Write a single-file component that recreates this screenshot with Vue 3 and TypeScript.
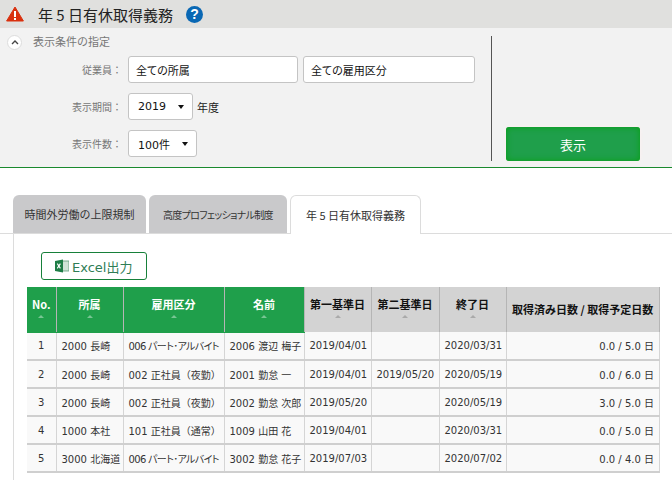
<script setup lang="ts">
interface Row {
  no: number
  dept: string
  kind: string
  name: string
  first: string
  second: string
  end: string
  days: string
}

const greenHeads = [
  { label: 'No.', width: 29 },
  { label: '所属', width: 67 },
  { label: '雇用区分', width: 101 },
  { label: '名前', width: 80 },
]
const grayHeads = [
  { label: '第一基準日', width: 67 },
  { label: '第二基準日', width: 68 },
  { label: '終了日', width: 67 },
]

const rows: Row[] = [
  { no: 1, dept: '2000 長崎', kind: '006 パート･アルバイト', name: '2006 渡辺 梅子', first: '2019/04/01', second: '', end: '2020/03/31', days: '0.0 / 5.0 日' },
  { no: 2, dept: '2000 長崎', kind: '002 正社員（夜勤）', name: '2001 勤怠 一', first: '2019/04/01', second: '2019/05/20', end: '2020/05/19', days: '0.0 / 6.0 日' },
  { no: 3, dept: '2000 長崎', kind: '002 正社員（夜勤）', name: '2002 勤怠 次郎', first: '2019/05/20', second: '', end: '2020/05/19', days: '3.0 / 5.0 日' },
  { no: 4, dept: '1000 本社', kind: '101 正社員（通常）', name: '1009 山田 花', first: '2019/04/01', second: '', end: '2020/03/31', days: '0.0 / 5.0 日' },
  { no: 5, dept: '3000 北海道', kind: '006 パート･アルバイト', name: '3002 勤怠 花子', first: '2019/07/03', second: '', end: '2020/07/02', days: '0.0 / 4.0 日' },
]
</script>

<template>
  <div class="page">
    <header class="title-bar">
      <svg class="warn" width="18" height="16" viewBox="0 0 18 16">
        <path d="M9 1 L17.4 15 H0.6 Z" fill="#d9310f" stroke="#d9310f" stroke-width="1" stroke-linejoin="round" />
        <rect x="8" y="5" width="2" height="6" fill="#fff" />
        <rect x="8" y="12" width="2" height="2" fill="#fff" />
      </svg>
      <h1 class="title">年 5 日有休取得義務</h1>
      <span class="help">?</span>
    </header>

    <section class="filter">
      <div class="filter-main">
        <div class="filter-head">
          <span class="toggle">
            <svg width="8" height="5" viewBox="0 0 8 5"><path d="M1 4 L4 1 L7 4" fill="none" stroke="#444" stroke-width="1.4" /></svg>
          </span>
          <span class="filter-caption">表示条件の指定</span>
        </div>
        <div class="field">
          <label>従業員：</label>
          <div class="box box-wide">全ての所属</div>
          <div class="box box-wide box-next">全ての雇用区分</div>
        </div>
        <div class="field field-year">
          <label>表示期間：</label>
          <div class="box box-select box-year">2019<i class="caret"></i></div>
          <span class="unit">年度</span>
        </div>
        <div class="field field-count">
          <label>表示件数：</label>
          <div class="box box-select box-count">100件<i class="caret"></i></div>
        </div>
      </div>
      <div class="filter-side">
        <button class="show-btn" type="button">表示</button>
      </div>
    </section>

    <nav class="tabs">
      <div class="tab tab-one">時間外労働の上限規制</div>
      <div class="tab tab-two">高度プロフェッショナル制度</div>
      <div class="tab tab-active">年 5 日有休取得義務</div>
    </nav>

    <main class="content">
      <button class="excel" type="button">
        <svg width="14" height="14" viewBox="0 0 14 14">
          <rect x="6" y="2" width="8" height="10" fill="#cfe3d6" stroke="#5d9c78" stroke-width="0.8" />
          <path d="M0 2 L8 0.5 V13.5 L0 12 Z" fill="#1e7d46" />
          <path d="M2.3 4.6 L5.4 9.4 M5.4 4.6 L2.3 9.4" stroke="#fff" stroke-width="1.1" />
        </svg>
        Excel出力
      </button>

      <table class="grid">
        <colgroup>
          <col v-for="h in greenHeads" :key="h.label" :style="{ width: h.width + 'px' }" />
          <col v-for="h in grayHeads" :key="h.label" :style="{ width: h.width + 'px' }" />
          <col />
        </colgroup>
        <thead>
          <tr>
            <th v-for="h in greenHeads" :key="h.label" class="green">
              {{ h.label }}<i class="sort"></i>
            </th>
            <th v-for="h in grayHeads" :key="h.label" class="gray">
              {{ h.label }}<i class="sort"></i>
            </th>
            <th class="gray gray-last">取得済み日数 / 取得予定日数</th>
          </tr>
        </thead>
        <tbody>
          <tr v-for="r in rows" :key="r.no">
            <td class="center">{{ r.no }}</td>
            <td>{{ r.dept }}</td>
            <td :class="{ kana: r.kind.includes('パ') }">{{ r.kind }}</td>
            <td>{{ r.name }}</td>
            <td>{{ r.first }}</td>
            <td>{{ r.second }}</td>
            <td>{{ r.end }}</td>
            <td class="right">{{ r.days }}</td>
          </tr>
        </tbody>
      </table>
    </main>
  </div>
</template>

<style>
html,
body {
  margin: 0;
  background: #fff;
  overflow: hidden;
}
</style>

<style scoped>
.page {
  width: 672px;
  height: 480px;
  overflow: hidden;
  font-family: "DejaVu Sans", "Noto Sans CJK JP", sans-serif;
  color: #222;
}

.title-bar {
  height: 28px;
  background: #e0e0de;
  display: flex;
  align-items: center;
  padding-left: 6px;
}

.warn {
  flex: none;
}

.title {
  margin: 0 0 0 14px;
  font-family: "Noto Sans CJK JP", sans-serif;
  font-size: 15px;
  font-weight: 400;
  color: #222;
}

.help {
  width: 17px;
  height: 17px;
  margin-left: 13px;
  border-radius: 50%;
  background: #0a68b4;
  color: #fff;
  font: bold 14px/17px "Liberation Sans", sans-serif;
  text-align: center;
}

.filter {
  height: 140px;
  box-sizing: border-box;
  background: #f2f2f2;
  border-bottom: 1px solid #1a8a2e;
  display: flex;
}

.filter-main {
  width: 491px;
  padding-left: 7px;
  box-sizing: border-box;
}

.filter-head {
  height: 28px;
  display: flex;
  align-items: center;
  font-family: "Noto Sans CJK JP", sans-serif;
  font-size: 11px;
  color: #777;
  gap: 11px;
}

.filter-caption {
  margin-top: -3px;
}

.toggle {
  width: 15px;
  height: 15px;
  border-radius: 50%;
  background: #fff;
  border: 1px solid #ddd;
  box-sizing: border-box;
  display: flex;
  align-items: center;
  justify-content: center;
}

.field {
  display: flex;
  align-items: center;
  font-family: "Noto Sans CJK JP", sans-serif;
}

.field label {
  width: 121px;
  padding-right: 6px;
  box-sizing: border-box;
  text-align: right;
  font-size: 10px;
  color: #777;
}

.field-year {
  margin-top: 10px;
}

.field-count {
  margin-top: 10px;
}

.box {
  box-sizing: border-box;
  height: 27px;
  background: #fff;
  border: 1px solid #c4c4c4;
  border-radius: 3px;
  font-size: 11px;
  font-feature-settings: "palt";
  color: #111;
  display: flex;
  align-items: center;
  padding-left: 7px;
}

.box-wide {
  width: 170px;
}

.box-next {
  margin-left: 5px;
  width: 172px;
}

.box-select {
  font-family: "DejaVu Sans", "Noto Sans CJK JP", sans-serif;
  padding-left: 9px;
  position: relative;
}

.box-year {
  width: 65px;
}

.box-count {
  width: 69px;
}

.caret {
  position: absolute;
  right: 8px;
  top: 11px;
  border-left: 3.5px solid transparent;
  border-right: 3.5px solid transparent;
  border-top: 4px solid #111;
}

.unit {
  margin-left: 4px;
  font-size: 11px;
  color: #222;
}

.filter-side {
  flex: 1;
  display: flex;
  align-items: flex-end;
  padding: 8px 0 6px 15px;
  position: relative;
}

.filter-side::before {
  content: "";
  position: absolute;
  left: 0;
  top: 8px;
  bottom: 6px;
  width: 1px;
  background: #555;
}

.show-btn {
  width: 134px;
  height: 34px;
  border: none;
  border-radius: 3px;
  background: #1f9f4b;
  box-shadow: inset 0 0 6px #06a012, 0 0 4px #fff0f0;
  color: #fff;
  font-family: "Noto Sans CJK JP", sans-serif;
  font-size: 13px;
}

.tabs {
  margin-top: 27px;
  height: 39px;
  box-sizing: border-box;
  padding-left: 13px;
  display: flex;
  align-items: flex-end;
  gap: 3px;
  border-bottom: 1px solid #dcdcdc;
  font-family: "Noto Sans CJK JP", sans-serif;
  font-size: 11px;
}

.tab {
  box-sizing: border-box;
  height: 38px;
  border-radius: 6px 6px 0 0;
  display: flex;
  align-items: center;
  justify-content: center;
  white-space: nowrap;
  background: #c9c9cb;
  color: #333;
}

.tab-one {
  width: 133px;
}

.tab-two {
  width: 138px;
  font-size: 10px;
  letter-spacing: -0.7px;
  font-feature-settings: "palt";
}

.tab-active {
  width: 131px;
  height: 39px;
  margin-bottom: -1px;
  background: #fff;
  border: 1px solid #dcdcdc;
  border-bottom: none;
}

.content {
  margin-left: 13px;
  height: 246px;
  border-left: 1px solid #dcdcdc;
  padding: 18px 0 0 13px;
}

.excel {
  display: flex;
  align-items: center;
  gap: 3px;
  width: 106px;
  height: 28px;
  margin-left: 14px;
  padding: 0 0 0 13px;
  box-sizing: border-box;
  background: #fff;
  border: 1px solid #17803a;
  border-radius: 3px;
  color: #2f7d55;
  font-family: "DejaVu Sans", "Noto Sans CJK JP", sans-serif;
  font-size: 13px;
}

.grid {
  margin-top: 7px;
  width: 633px;
  table-layout: fixed;
  border-collapse: collapse;
  font-size: 10px;
}

.grid th {
  height: 45px;
  padding: 10px 0 0;
  font-family: "Noto Sans CJK JP", sans-serif;
  font-size: 11px;
  line-height: 15px;
  font-weight: 700;
  text-align: center;
  vertical-align: top;
  box-sizing: border-box;
  border-right: 1px solid #b5b5b5;
}

.green {
  background: #1f9f4b;
  color: #fff;
  border-bottom: 1px solid #1f9f4b;
}

.gray {
  background: #d3d3d3;
  color: #111;
}

.grid .gray-last {
  vertical-align: middle;
  padding-top: 0;
  white-space: nowrap;
}

.sort {
  display: block;
  width: 0;
  margin: 3px auto 0;
  border-left: 3px solid transparent;
  border-right: 3px solid transparent;
  border-bottom: 3px solid rgba(255, 255, 255, 0.4);
}

.gray .sort {
  border-bottom-color: #aaa;
}

.grid td {
  box-sizing: border-box;
  height: 28px;
  padding: 0 5px;
  background: #f9f9f9;
  color: #333;
  white-space: nowrap;
  border-right: 1px solid #d5d5d5;
  border-bottom: 2px solid #cfcfcf;
}

.grid .kana {
  letter-spacing: -0.65px;
  font-feature-settings: "palt";
}

.center {
  text-align: center;
}

.right {
  text-align: right;
}
</style>
